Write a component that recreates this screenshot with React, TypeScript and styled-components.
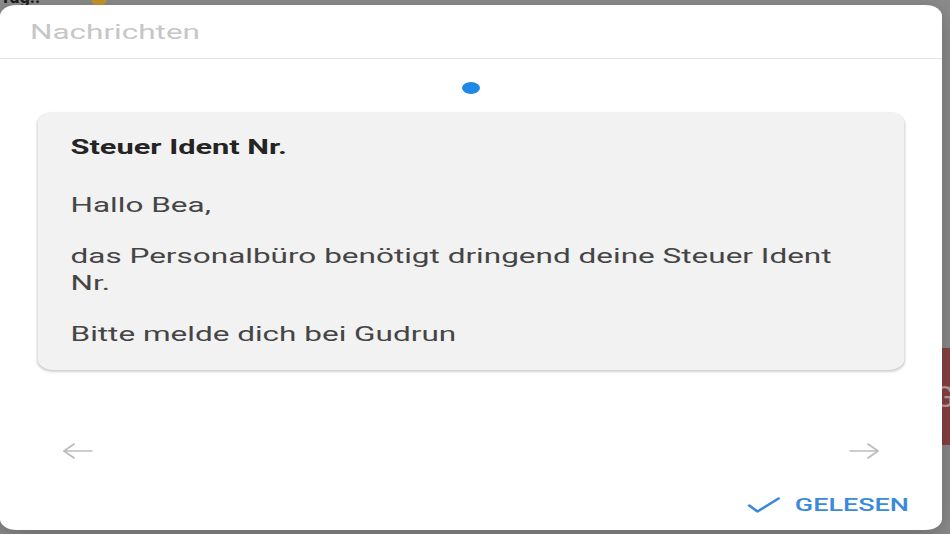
import React from "react";
import styled, { createGlobalStyle } from "styled-components";

// the source screenshot is stretched horizontally, so the dialog is laid out
// at its natural width and widened with scaleX
const STRETCH = 1.5;

const GlobalStyle = createGlobalStyle`
  html, body {
    margin: 0;
    padding: 0;
    background: #8c8c8c;
    overflow: hidden;
  }
  body {
    font-family: Roboto, "Noto Sans", Arial, sans-serif;
  }
`;

export default function App() {
  return (
    <>
      <GlobalStyle />
      <Page>
        <Behind>
          <BehindText>
            Tag.: <Emoji>😊</Emoji>
          </BehindText>
          <BehindButton>G</BehindButton>
        </Behind>
        <Stage>
          <Dialog>
            <Header>
              <Title>Nachrichten</Title>
            </Header>
            <Dots>
              <Dot $active />
            </Dots>
            <MessageCard>
              <CardTitle>Steuer Ident Nr.</CardTitle>
              <CardText>Hallo Bea,</CardText>
              <CardText>das Personalbüro benötigt dringend deine Steuer Ident Nr.</CardText>
              <CardText>Bitte melde dich bei Gudrun</CardText>
            </MessageCard>
            <NavRow>
              <NavButton aria-label="zurück">
                <ArrowIcon dir="left" />
              </NavButton>
              <NavButton aria-label="weiter">
                <ArrowIcon dir="right" />
              </NavButton>
            </NavRow>
            <Footer>
              <ReadButton>
                <svg width="22" height="24" viewBox="0 0 22 24" fill="none" stroke="#3b8ad9" strokeWidth="2.2" strokeLinecap="round" strokeLinejoin="round">
                  <path d="M1.5 13.5l5.5 6L21 6.5" />
                </svg>
                GELESEN
              </ReadButton>
            </Footer>
          </Dialog>
        </Stage>
      </Page>
    </>
  );
}

function ArrowIcon(props: { dir: "left" | "right" }) {
  const d = props.dir === "left" ? "M22 12H2M9 4.5L1.8 12 9 19.5" : "M2 12h20M15 4.5l7.2 7.5-7.2 7.5";
  return (
    <svg width="22" height="24" viewBox="0 0 24 24" fill="none" stroke="#bdbdbd" strokeWidth="1.6" strokeLinecap="round" strokeLinejoin="round">
      <path d={d} />
    </svg>
  );
}

const Page = styled.div`
  position: relative;
  width: 950px;
  height: 534px;
  overflow: hidden;
`;

const Behind = styled.div`
  position: absolute;
  inset: 0;
`;

const BehindText = styled.div`
  margin-top: -14px;
  padding-left: 0;
  font-size: 18px;
  font-weight: 700;
  color: #1e1e1e;
`;

const Emoji = styled.span`
  display: inline-block;
  width: 16px;
  height: 16px;
  margin-left: 46px;
  border-radius: 50%;
  background: #c9962a;
  color: transparent;
  vertical-align: middle;
`;

const BehindButton = styled.div`
  position: absolute;
  left: 930px;
  top: 348px;
  width: 80px;
  height: 97px;
  background: #8a4343;
  color: #bfa3a3;
  font-size: 30px;
  display: flex;
  align-items: center;
  padding-left: 4px;
`;

const Stage = styled.div`
  position: relative;
  width: ${950 / STRETCH}px;
  height: 534px;
  padding-top: 5px;
  box-sizing: border-box;
  transform: scaleX(${STRETCH});
  transform-origin: 0 0;
`;

const Dialog = styled.div`
  width: 628px;
  height: 525px;
  background: #ffffff;
  border-radius: 11px;
  box-shadow: 0 6px 20px rgba(0, 0, 0, 0.25);
  display: flex;
  flex-direction: column;
  overflow: hidden;
`;

const Header = styled.div`
  height: 53px;
  border-bottom: 1px solid #e2e2e2;
  display: flex;
  align-items: center;
  padding-left: 20px;
`;

const Title = styled.h2`
  margin: 0;
  font-size: 21px;
  font-weight: 400;
  color: #c6c6c6;
  padding-top: 1px;
`;

const Dots = styled.div`
  display: flex;
  justify-content: center;
  margin: 23px 0 18px;
`;

const Dot = styled.span<{ $active?: boolean }>`
  width: 12px;
  height: 12px;
  border-radius: 50%;
  background: ${(p) => (p.$active ? "#1e88e5" : "#d6d6d6")};
`;

const MessageCard = styled.div`
  margin: 0 25px;
  height: 258px;
  box-sizing: border-box;
  padding: 23px 36px 0 22px;
  background: #f2f2f2;
  border-radius: 11px;
  box-shadow: 0 2px 2px rgba(0, 0, 0, 0.18), 0 0 1px rgba(0, 0, 0, 0.08);
`;

const CardTitle = styled.h3`
  margin: 0 0 33px;
  font-size: 20.5px;
  line-height: 24px;
  font-weight: 700;
  color: #242424;
`;

const CardText = styled.p`
  margin: 0 0 24px;
  font-size: 21px;
  line-height: 27px;
  color: #454545;
`;

const NavRow = styled.div`
  display: flex;
  justify-content: space-between;
  align-items: center;
  margin-top: 69px;
  padding: 0 41px 0 41px;
  height: 24px;
`;

const NavButton = styled.button`
  display: flex;
  padding: 0;
  border: none;
  background: none;
  cursor: pointer;
`;

const Footer = styled.div`
  display: flex;
  justify-content: flex-end;
  margin-top: 23px;
  padding-right: 22px;
`;

const ReadButton = styled.button`
  display: flex;
  align-items: center;
  gap: 10px;
  height: 36px;
  padding: 0;
  border: none;
  background: none;
  font-family: Roboto, "Noto Sans", Arial, sans-serif;
  font-size: 18px;
  font-weight: 500;
  color: #3b8ad9;
  cursor: pointer;
`;
